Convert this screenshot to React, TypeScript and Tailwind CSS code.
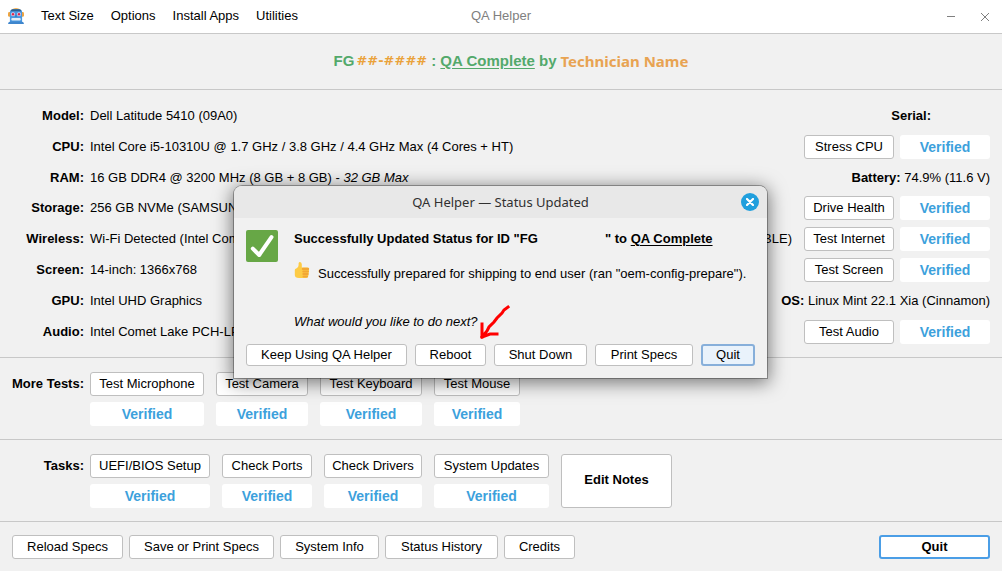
import type { ReactNode } from "react";

const button =
  "flex h-6 items-center justify-center whitespace-nowrap rounded-[3px] border border-[#bfbfbf] bg-white";
const dialogButton =
  "flex h-[22px] items-center justify-center whitespace-nowrap rounded-[3px] border border-[#bfbfbf] bg-white";
const badge =
  "flex h-6 items-center justify-center rounded-[3px] bg-white text-sm font-bold text-[#3ca1dc]";

function RobotIcon() {
  return (
    <svg viewBox="0 0 16 16" className="size-4" aria-hidden="true">
      <path d="M2.500 3.500 C3.500 -.7 12.500 -.7 13.500 3.500 Z" fill="#f19a20" />
      <rect x="0" y="4" width="3" height="4.800" rx="1.400" fill="#f3a43a" />
      <rect x="13" y="4" width="3" height="4.800" rx="1.400" fill="#f3a43a" />
      <path d="M1.900 4 Q2.200 1.200 5 1.200 H11 Q13.800 1.200 14.100 4 V14 H1.900 Z" fill="#4a98e0" />
      <path d="M2.600 3.200 Q3.300 1.200 5 1.200 H11 Q12.700 1.200 13.400 3.200 Z" fill="#2c5f90" />
      <circle cx="5" cy="6.300" r="2" fill="#dcd6ea" />
      <circle cx="11" cy="6.300" r="2" fill="#dcd6ea" />
      <circle cx="5" cy="6.300" r="1.200" fill="#e0244c" />
      <circle cx="11" cy="6.300" r="1.200" fill="#e0244c" />
      <path d="M8 6.600 L7.100 8.800 H8.900 Z" fill="#2f6fae" />
      <rect x="3.300" y="10" width="9.400" height="2.600" rx="1" fill="#e4eef6" />
      <path d="M0 16 Q0 14 2.500 13.600 H13.500 Q16 14 16 16 Z" fill="#3f86cd" />
    </svg>
  );
}

function CheckIcon() {
  return (
    <svg viewBox="0 0 32 32" className="size-8 shrink-0" aria-hidden="true">
      <rect width="32" height="32" rx="2" fill="#67a746" />
      <path
        d="M6.800 18.600 L13.200 25 L25.500 7.200"
        fill="none"
        stroke="#fff"
        strokeWidth="4"
        strokeLinecap="round"
        strokeLinejoin="round"
      />
    </svg>
  );
}

function ThumbIcon() {
  return (
    <svg viewBox="0 0 16 16" className="size-4 shrink-0" aria-hidden="true">
      <path
        d="M.8 8 Q.8 6.800 2.300 6.600 Q4.600 5.500 4.600 3 V1.200 Q4.800 0 6 0 Q7.700 .3 7.800 2.300 V5.600 H13 Q15.500 5.800 15 8 L14.300 14 Q14 16 12 15.900 H5 Q.8 15.900 .8 13 Z"
        fill="#fdcb45"
      />
      <rect x="7.800" y="5.800" width="7.400" height="2.200" rx="1.100" fill="#f2a634" />
      <rect x="8.300" y="8.400" width="6.700" height="2.100" rx="1" fill="#f2a634" />
      <rect x="8.300" y="10.900" width="6.400" height="2.100" rx="1" fill="#f2a634" />
      <rect x="8.500" y="13.400" width="5.500" height="2.200" rx="1" fill="#f2a634" />
    </svg>
  );
}

type SpecProps = {
  label: string;
  children: ReactNode;
  test?: string;
  extra?: ReactNode;
  short?: boolean;
};

function Spec({ label, children, test, extra, short }: SpecProps) {
  return (
    <div className={short ? "flex h-[23px] items-center" : "flex h-6 items-center"}>
      <div className="w-[72px] shrink-0 text-right font-bold">{label}</div>
      <div className="ml-1.5 mr-3 flex grow justify-between whitespace-nowrap">{children}</div>
      {extra}
      {test && (
        <div className="grid shrink-0 grid-cols-[90px_90px] gap-1.5">
          <button className={button}>{test}</button>
          <span className={badge}>Verified</span>
        </div>
      )}
    </div>
  );
}

function Check({ name }: { name: string }) {
  return (
    <div className="flex flex-col gap-1.5">
      <button className={button}>{name}</button>
      <span className={badge}>Verified</span>
    </div>
  );
}

function StatusDialog() {
  return (
    <div
      role="dialog"
      aria-labelledby="dialog-title"
      className="absolute left-[234px] top-[186px] w-[533px] rounded-t-lg bg-[#f1f1f1] shadow-[0_0_0_1px_rgba(0,0,0,0.3),0_3px_18px_2px_rgba(0,0,0,0.5)]"
    >
      <div className="grid h-8 grid-cols-[1fr_auto_1fr] items-center rounded-t-lg bg-[#e8e8e8] px-2">
        <h2
          id="dialog-title"
          className="col-start-2 font-['Noto_Sans',sans-serif] text-[13px] text-[#303030]"
        >
          QA Helper — Status Updated
        </h2>
        <button
          aria-label="Close dialog"
          className="flex size-[18px] items-center justify-center justify-self-end rounded-full bg-[#209fdd]"
        >
          <svg viewBox="0 0 8 8" className="size-2" aria-hidden="true">
            <path d="M1 1 L7 7 M7 1 L1 7" stroke="#fff" strokeWidth="2.200" strokeLinecap="round" />
          </svg>
        </button>
      </div>
      <div className="px-3 py-3">
        <div className="flex gap-4">
          <CheckIcon />
          <div className="whitespace-nowrap">
            <p className="flex h-[18px] items-center font-bold">
              <span className="w-[311px]">Successfully Updated Status for ID "FG</span>
              <span>
                " to <u className="underline-offset-2">QA Complete</u>
              </span>
            </p>
            <p className="mt-3.5 flex h-5 gap-2">
              <ThumbIcon />
              <span className="self-end">
                Successfully prepared for shipping to end user (ran "oem-config-prepare").
              </span>
            </p>
            <p className="mt-8 leading-4 italic">What would you like to do next?</p>
          </div>
        </div>
        <div className="mt-3.5 grid grid-cols-[161px_71px_93px_98px_54px] gap-2">
          <button className={dialogButton}>Keep Using QA Helper</button>
          <button className={dialogButton}>Reboot</button>
          <button className={dialogButton}>Shut Down</button>
          <button className={dialogButton}>Print Specs</button>
          <button className={`${dialogButton} border-2! border-[#87afda]! bg-[#e9f2fb]!`}>
            Quit
          </button>
        </div>
      </div>
      <svg
        viewBox="0 0 32 36"
        className="absolute left-[245px] top-[118px] h-9 w-8"
        aria-hidden="true"
      >
        <path
          d="M29 3 L25 6 L23 9 L18 14 L15 18 L10 23 L8 27 L3 33 M3 20 V33 M18 30 L11 30 L3 33"
          fill="none"
          stroke="#f00"
          strokeWidth="3"
          strokeLinecap="square"
        />
      </svg>
    </div>
  );
}

export default function App() {
  return (
    <div className="relative min-h-screen bg-[#f1f1f1] font-['Liberation_Sans',Arial,sans-serif] text-[13px] leading-4 text-black">
      <header className="grid h-[34px] grid-cols-[1fr_auto_1fr] items-center border-b border-[#c8c8c8] bg-white pb-0.5 pl-2 pr-2">
        <nav className="flex items-center gap-[17px] whitespace-nowrap">
          <RobotIcon />
          <button>Text Size</button>
          <button>Options</button>
          <button>Install Apps</button>
          <button>Utilities</button>
        </nav>
        <h1 className="text-[#808080]">QA Helper</h1>
        <div className="flex justify-end gap-[21px] pr-1 text-[#808080]">
          <button aria-label="Minimize" className="flex size-3 items-center">
            <svg viewBox="0 0 12 12" className="size-3" aria-hidden="true">
              <path d="M2 6.500 H10" stroke="currentColor" />
            </svg>
          </button>
          <button aria-label="Close" className="flex size-3 items-center">
            <svg viewBox="0 0 12 12" className="size-3" aria-hidden="true">
              <path d="M3 3 L11 11 M11 3 L3 11" stroke="currentColor" />
            </svg>
          </button>
        </div>
      </header>

      <div className="flex h-14 items-center justify-center gap-1 whitespace-nowrap border-b border-[#c8c8c8] pb-0.5 pl-5 text-[15px] font-bold text-[#53a96b]">
        <span className="flex items-center gap-0.5">
          FG
          <span className="font-['DejaVu_Sans',sans-serif] text-[13px] text-[#eaa23a]">##-####</span>
        </span>
        <span>
          : <u className="underline-offset-2">QA Complete</u> by
        </span>
        <span className="font-['Noto_Sans',sans-serif] text-[#e8a352]">Technician Name</span>
      </div>

      <section className="flex flex-col gap-[7px] border-b border-[#c8c8c8] px-3 pb-[13px] pt-3.5">
        <Spec label="Model:" extra={<div className="mr-[59px] font-bold">Serial:</div>}>
          Dell Latitude 5410 (09A0)
        </Spec>
        <Spec label="CPU:" test="Stress CPU">
          Intel Core i5-10310U @ 1.7 GHz / 3.8 GHz / 4.4 GHz Max (4 Cores + HT)
        </Spec>
        <Spec
          label="RAM:"
          short
          extra={
            <div>
              <b>Battery:</b> 74.9% (11.6 V)
            </div>
          }
        >
          <span>
            16 GB DDR4 @ 3200 MHz (8 GB + 8 GB) - <i>32 GB Max</i>
          </span>
        </Spec>
        <Spec label="Storage:" test="Drive Health">
          256 GB NVMe (SAMSUNG
        </Spec>
        <Spec label="Wireless:" test="Test Internet">
          <span>Wi-Fi Detected (Intel Comet</span>
          <span>BLE)</span>
        </Spec>
        <Spec label="Screen:" test="Test Screen">
          14-inch: 1366x768
        </Spec>
        <Spec
          label="GPU:"
          extra={
            <div>
              <b>OS:</b> Linux Mint 22.1 Xia (Cinnamon)
            </div>
          }
        >
          Intel UHD Graphics
        </Spec>
        <Spec label="Audio:" test="Test Audio">
          Intel Comet Lake PCH-LP
        </Spec>
      </section>

      <section className="flex gap-1.5 border-b border-[#c8c8c8] px-3 pb-[13px] pt-3.5">
        <h2 className="w-[72px] whitespace-nowrap text-right font-bold leading-6">More Tests:</h2>
        <div className="grid grid-cols-[114px_92px_102px_86px] gap-3">
          <Check name="Test Microphone" />
          <Check name="Test Camera" />
          <Check name="Test Keyboard" />
          <Check name="Test Mouse" />
        </div>
      </section>

      <section className="flex gap-1.5 border-b border-[#c8c8c8] px-3 pb-[13px] pt-3.5">
        <h2 className="w-[72px] text-right font-bold leading-6">Tasks:</h2>
        <div className="grid grid-cols-[120px_90px_98px_115px_111px] gap-3">
          <Check name="UEFI/BIOS Setup" />
          <Check name="Check Ports" />
          <Check name="Check Drivers" />
          <Check name="System Updates" />
          <button className={`${button} h-auto! pb-0.5 font-bold`}>Edit Notes</button>
        </div>
      </section>

      <footer className="flex justify-between px-3 pb-3 pt-[13px]">
        <div className="grid grid-cols-[111px_145px_99px_113px_71px] gap-1.5">
          <button className={button}>Reload Specs</button>
          <button className={button}>Save or Print Specs</button>
          <button className={button}>System Info</button>
          <button className={button}>Status History</button>
          <button className={button}>Credits</button>
        </div>
        <button className={`${button} w-[111px] border-2! border-[#4b9ee6]! font-bold`}>
          Quit
        </button>
      </footer>

      <StatusDialog />
    </div>
  );
}
